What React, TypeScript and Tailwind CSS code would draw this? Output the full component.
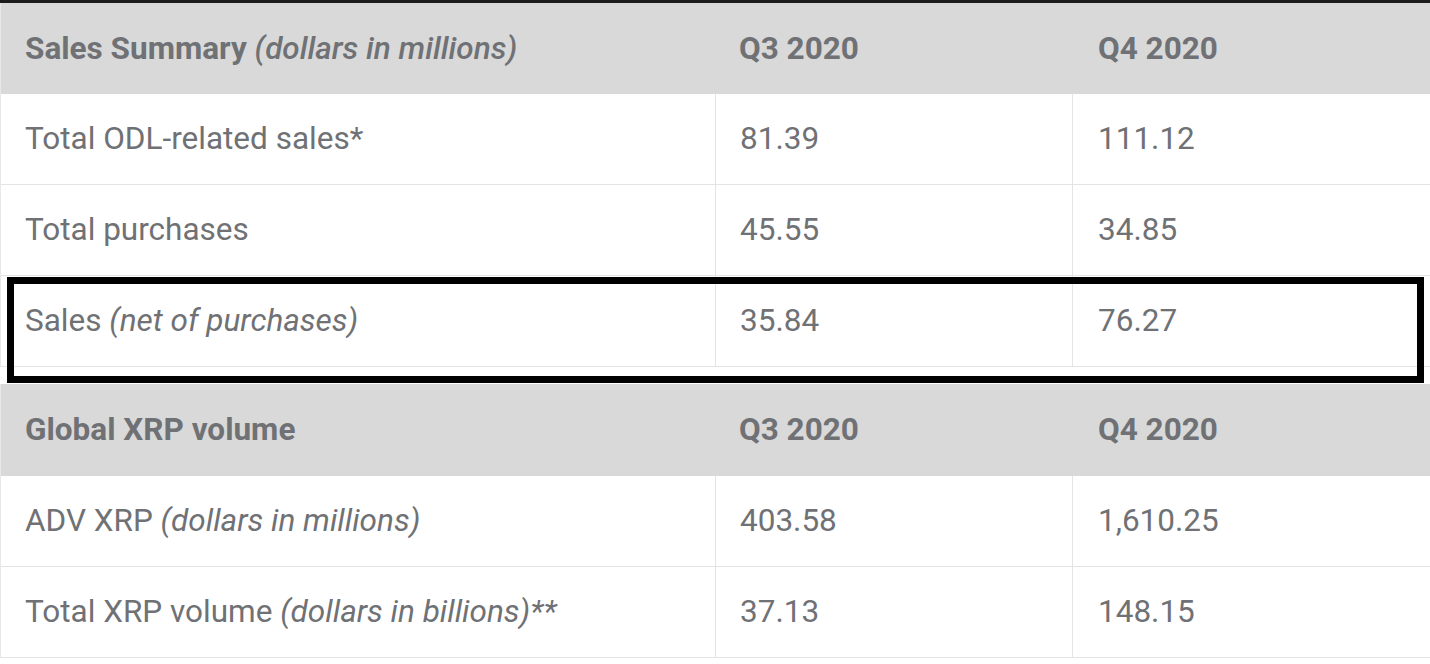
import React from "react";

type Row = { label: React.ReactNode; q3: string; q4: string };

const salesRows: Row[] = [
  { label: "Total ODL-related sales*", q3: "81.39", q4: "111.12" },
  { label: "Total purchases", q3: "45.55", q4: "34.85" },
  {
    label: (
      <>
        Sales <em>(net of purchases)</em>
      </>
    ),
    q3: "35.84",
    q4: "76.27",
  },
];

const volumeRows: Row[] = [
  {
    label: (
      <>
        ADV XRP <em>(dollars in millions)</em>
      </>
    ),
    q3: "403.58",
    q4: "1,610.25",
  },
  {
    label: (
      <>
        Total XRP volume <em>(dollars in billions)**</em>
      </>
    ),
    q3: "37.13",
    q4: "148.15",
  },
];

const HeaderRow = ({ title, tall }: { title: React.ReactNode; tall?: boolean }) => (
  <div
    className={
      "grid grid-cols-[714px_357px_1fr] items-center bg-[#d9d9d9] font-bold text-[#6f7175] " +
      (tall ? "h-[92px]" : "h-[91px]")
    }
  >
    <div className="pl-6">{title}</div>
    <div className="pl-6">Q3 2020</div>
    <div className="pl-[26px]">Q4 2020</div>
  </div>
);

const BodyRow = ({ row }: { row: Row }) => (
  <div className="grid h-[91px] grid-cols-[714px_357px_1fr] border-b border-[#e4e4e4] text-[#6f7175]">
    <div className="flex items-center pl-6">
      <span>{row.label}</span>
    </div>
    <div className="flex items-center border-l border-[#e4e4e4] pl-6">{row.q3}</div>
    <div className="flex items-center border-l border-[#e4e4e4] pl-[25px]">{row.q4}</div>
  </div>
);

export default function App() {
  return (
    <div
      className="relative h-[664px] w-[1430px] overflow-hidden bg-white text-[31.5px]"
      style={{ fontFamily: "Roboto, 'Liberation Sans', sans-serif" }}
    >
      <div className="h-[3px] bg-[#1c1c1c]" />
      <div className="border-l border-[#e8e8e8]">
        <HeaderRow
          title={
            <span>
              Sales Summary <em className="font-medium">(dollars in millions)</em>
            </span>
          }
        />
        {salesRows.map((r, i) => (
          <BodyRow key={i} row={r} />
        ))}
      </div>

      <div className="mt-[17px] border-l border-[#e8e8e8]">
        <HeaderRow title="Global XRP volume" tall />
        {volumeRows.map((r, i) => (
          <BodyRow key={i} row={r} />
        ))}
      </div>

      {/* highlight box drawn over the net sales row */}
      <div className="pointer-events-none absolute left-[7px] top-[277px] h-[106px] w-[1417px] border-[7px] border-black" />
    </div>
  );
}
